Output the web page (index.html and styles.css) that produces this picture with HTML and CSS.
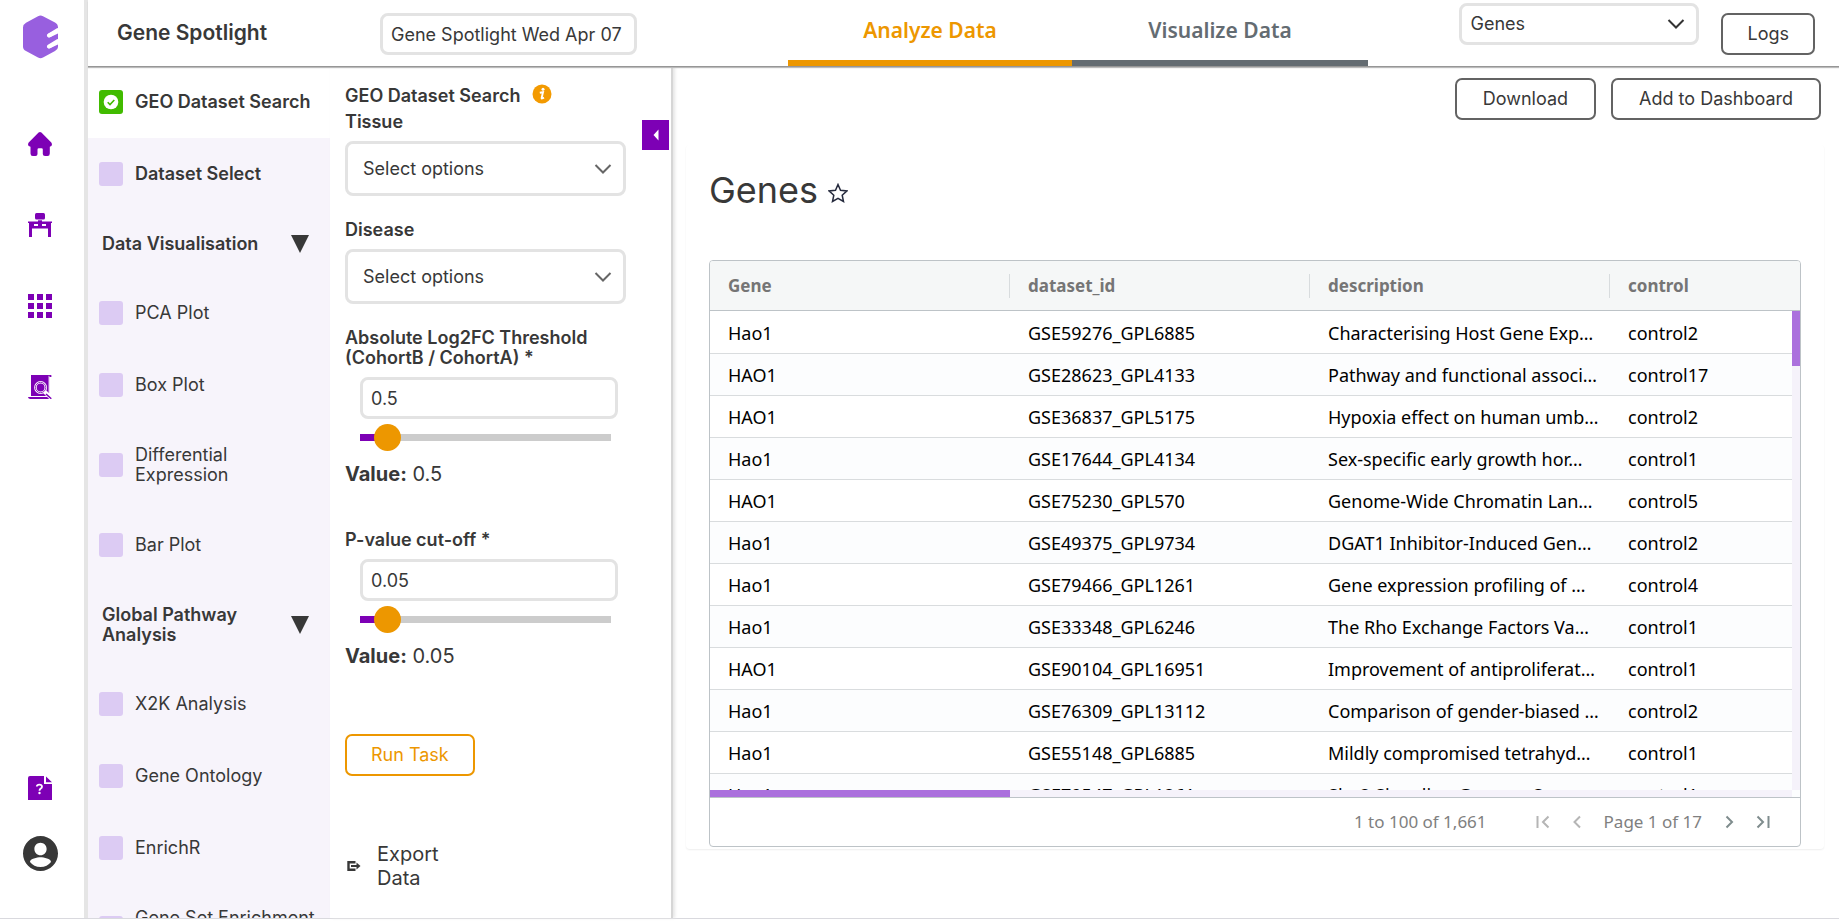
FILE: index.html
```html
<!DOCTYPE html>
<html lang="en">
<head>
<meta charset="utf-8">
<title>Gene Spotlight</title>
<link rel="stylesheet" href="styles.css">
</head>
<body>
<div class="app">
  <nav class="rail" aria-label="Main">
    <a class="rail-logo" href="#" aria-label="Start"><svg width="36" height="44" viewBox="0 0 36 44"><path fill="#985fdf" d="M15 1.2Q17.500 0 20 1.200L32 7.600Q35 9.300 35 12.500V14L25.500 18.500Q23.500 20 24.700 21.700Q25.700 22.700 27.500 22L35 18.500V28L25.500 30.500Q23.500 32 24.700 33Q25.700 33.700 27.500 33L35 29.500V32Q35 34.500 32 36L20 42.600Q17.500 43.800 15 42.600L3 36Q0 34.500 0 31.500V12.500Q0 9.500 3 7.800Z"/><path d="M26 20.500L35 15M26 31.500L35 26" stroke="#fff" stroke-width="4" stroke-linecap="round"/></svg></a>
    <a class="rail-link" href="#" aria-label="Home"><svg width="24" height="24" viewBox="0 0 24 24"><path fill="#7d00b5" d="M10.600.6Q12-.6 13.400.6L23.300 10.500Q24.600 12.500 23.300 14L21.800 14.700V21.500Q21.800 24 19.500 24H17Q14.800 24 14.800 22V17.500Q14.800 16.300 13.500 16.300H10.800Q9.500 16.300 9.500 17.500V22Q9.500 24 7.500 24H4.800Q2.500 24 2.500 21.500V14.700L.7 14Q-.6 12.500.7 10.500Z"/></svg></a>
    <a class="rail-link" href="#" aria-label="Workspace"><svg width="24" height="24" viewBox="0 0 24 24" fill="#7d00b5"><rect x="7" y="0" width="10" height="6.500" rx="1.500"/><rect x="10" y="7.300" width="4" height="2"/><path fill-rule="evenodd" d="M0 8.500H24V10H23V24H20V15.500H4V24H1V10H0ZM6 11V13H10V11ZM14 11V13H18V11Z"/></svg></a>
    <a class="rail-link" href="#" aria-label="Apps"><svg width="24" height="24" viewBox="0 0 24 24"><path fill="#7d00b5" d="M0 0h6v6H0zM9 0h6v6H9zM18 0h6v6h-6zM0 9h6v6H0zM9 9h6v6H9zM18 9h6v6h-6zM0 18h6v6H0zM9 18h6v6H9zM18 18h6v6h-6z"/></svg></a>
    <a class="rail-link" href="#" aria-label="Reports"><svg width="24" height="24" viewBox="0 0 24 24"><path fill="#7d00b5" d="M3 0H23Q24 .6 23.300 2H21.200V18L17.800 21H3ZM0 22H22V24H2Q0 23.500 0 22Z"/><path d="M21 .8V18" stroke="#fff" stroke-width=".8"/><path d="M16.500 16.500L23.300 23.300" stroke="#fff" stroke-width="4"/><circle cx="12.600" cy="12.500" r="5.200" fill="none" stroke="#fff" stroke-width="2.600"/><circle cx="12.600" cy="12.500" r="5.200" fill="none" stroke="#7d00b5" stroke-width=".8"/><path d="M18 19L23.300 23.700" stroke="#7d00b5" stroke-width="1.500"/></svg></a>
    <a class="rail-link rail-help" href="#" aria-label="Help"><svg width="24" height="24" viewBox="0 0 24 24"><path fill="#7d00b5" d="M2 0H16V8H24V24H0V2Q0 0 2 0ZM18 .5L24 6.300H18Z"/><path d="M8.800 10.500Q9 8.600 11.300 8.600Q14 8.600 14 10.700Q14 11.800 12.700 12.600Q11.500 13.300 11.500 14.700" fill="none" stroke="#fff" stroke-width="1.800"/><circle cx="11.500" cy="17" r="1.200" fill="#fff"/></svg></a>
    <a class="rail-user" href="#" aria-label="Account"><svg width="35" height="35" viewBox="2 2 20 20"><path fill="#383838" d="M12 2C6.480 2 2 6.480 2 12s4.480 10 10 10 10-4.480 10-10S17.520 2 12 2zm0 3.800c2 0 3.500 1.600 3.500 3.600s-1.500 3.600-3.500 3.600-3.500-1.600-3.500-3.600 1.500-3.600 3.500-3.600zm0 13.900c-2.500 0-4.700-1.100-6-2.900.03-1.700 4-2.600 6-2.600s5.970.9 6 2.600c-1.300 1.800-3.500 2.900-6 2.900z"/></svg></a>
  </nav>

  <div class="workspace">
    <header class="topbar">
      <h1 class="app-title">Gene Spotlight</h1>
      <input class="box session-name" type="text" aria-label="Session name" value="Gene Spotlight Wed Apr 07 2021">
      <div class="tabs" role="tablist">
        <button class="tab tab-active" role="tab" aria-selected="true">Analyze Data</button>
        <button class="tab" role="tab" aria-selected="false">Visualize Data</button>
      </div>
      <div class="select-wrap view-select">
        <select class="box" aria-label="View"><option>Genes</option></select>
        <svg class="chevron chevron-dark" width="18" height="10" viewBox="0 0 18 10"><path d="M1.500 1L9 8.500L16.500 1"/></svg>
      </div>
      <button class="btn btn-logs">Logs</button>
    </header>

    <div class="body">
      <aside class="steps">
        <label class="step step-active"><input class="step-check" type="checkbox" checked><svg class="tick" width="24" height="24" viewBox="0 0 24 24"><circle cx="12" cy="12" r="7.300" fill="#fff"/><path d="M8.700 12.200L11 14.500L15.300 10" fill="none" stroke="#41bb00" stroke-width="1.600"/></svg><span>GEO Dataset Search</span></label>
        <label class="step step-strong"><input class="step-check" type="checkbox"><span>Dataset Select</span></label>
        <button class="group"><span>Data Visualisation</span><span class="caret"></span></button>
        <label class="step"><input class="step-check" type="checkbox"><span>PCA Plot</span></label>
        <label class="step"><input class="step-check" type="checkbox"><span>Box Plot</span></label>
        <label class="step"><input class="step-check" type="checkbox"><span>Differential<br>Expression</span></label>
        <label class="step"><input class="step-check" type="checkbox"><span>Bar Plot</span></label>
        <button class="group"><span>Global Pathway<br>Analysis</span><span class="caret"></span></button>
        <label class="step"><input class="step-check" type="checkbox"><span>X2K Analysis</span></label>
        <label class="step"><input class="step-check" type="checkbox"><span>Gene Ontology</span></label>
        <label class="step"><input class="step-check" type="checkbox"><span>EnrichR</span></label>
        <label class="step"><input class="step-check" type="checkbox"><span>Gene Set Enrichment<br>Analysis</span></label>
      </aside>

      <form class="params">
        <button class="collapse" type="button" aria-label="Collapse panel"><svg width="6" height="12" viewBox="0 0 6 12"><path fill="#fff" d="M5.500.5V11.500L.5 6Z"/></svg></button>
        <h2 class="label params-title">GEO Dataset Search <svg width="20" height="20" viewBox="0 0 20 20"><circle cx="10" cy="10" r="9.500" fill="#f39a00"/><circle cx="11" cy="5.300" r="1.500" fill="#fff"/><path d="M7.800 8.800L11 8.200L9.600 14Q9.600 15 12 13.700" fill="none" stroke="#fff" stroke-width="1.900"/></svg></h2>
        <div class="field">
          <label class="label" for="tissue">Tissue</label>
          <div class="select-wrap"><select class="box box-tall" id="tissue"><option>Select options</option></select><svg class="chevron" width="18" height="10" viewBox="0 0 18 10"><path d="M1.500 1L9 8.500L16.500 1"/></svg></div>
        </div>
        <div class="field">
          <label class="label" for="disease">Disease</label>
          <div class="select-wrap"><select class="box box-tall" id="disease"><option>Select options</option></select><svg class="chevron" width="18" height="10" viewBox="0 0 18 10"><path d="M1.500 1L9 8.500L16.500 1"/></svg></div>
        </div>
        <div class="metric">
          <label class="label" for="fc">Absolute Log2FC Threshold<br>(CohortB / CohortA) *</label>
          <div class="metric-controls">
            <input class="box" id="fc" type="text" value="0.5">
            <input class="slider" type="range" aria-label="Log2FC threshold" min="0" max="8" step="0.1" value="0.5">
          </div>
          <p class="value"><strong>Value:</strong> 0.5</p>
        </div>
        <div class="metric">
          <label class="label" for="pv">P-value cut-off *</label>
          <div class="metric-controls">
            <input class="box" id="pv" type="text" value="0.05">
            <input class="slider" type="range" aria-label="P-value cut-off" min="0" max="0.8" step="0.01" value="0.05">
          </div>
          <p class="value"><strong>Value:</strong> 0.05</p>
        </div>
        <button class="btn btn-run" type="button">Run Task</button>
        <a class="export" href="#"><svg width="14" height="10" viewBox="0 0 14 10"><path d="M8.500 1.200H1.500V8.800H8.500" fill="none" stroke="#383838" stroke-width="2.400"/><path d="M4 5H11" stroke="#383838" stroke-width="2"/><path fill="#383838" d="M9.500 1.500L13.500 5L9.500 8.500Z"/></svg><span>Export<br>Data</span></a>
      </form>

      <main class="results">
        <div class="actions">
          <button class="btn btn-wide">Download</button>
          <button class="btn btn-wide">Add to Dashboard</button>
        </div>
        <section class="card">
          <h2 class="card-title">Genes <svg width="20" height="20" viewBox="0 0 20 20"><path fill="none" stroke="#252a3d" stroke-width="1.500" d="M10 1.500L12.500 7.200L19 7.900L14.200 12.200L15.500 18.500L10 15.300L4.500 18.500L5.800 12.200L1 7.900L7.500 7.200Z"/></svg></h2>
          <div class="grid">
            <div class="grid-view">
              <table class="table">
                <colgroup><col class="col"><col class="col"><col class="col"><col></colgroup>
                <thead><tr><th><div>Gene</div></th><th><div>dataset_id</div></th><th><div>description</div></th><th><div>control</div></th></tr></thead>
                <tbody>
                  <tr><td>Hao1</td><td>GSE59276_GPL6885</td><td>Characterising Host Gene Exp…</td><td>control2</td></tr>
                  <tr><td>HAO1</td><td>GSE28623_GPL4133</td><td>Pathway and functional associ…</td><td>control17</td></tr>
                  <tr><td>HAO1</td><td>GSE36837_GPL5175</td><td>Hypoxia effect on human umb…</td><td>control2</td></tr>
                  <tr><td>Hao1</td><td>GSE17644_GPL4134</td><td>Sex-specific early growth hor…</td><td>control1</td></tr>
                  <tr><td>HAO1</td><td>GSE75230_GPL570</td><td>Genome-Wide Chromatin Lan…</td><td>control5</td></tr>
                  <tr><td>Hao1</td><td>GSE49375_GPL9734</td><td>DGAT1 Inhibitor-Induced Gen…</td><td>control2</td></tr>
                  <tr><td>Hao1</td><td>GSE79466_GPL1261</td><td>Gene expression profiling of …</td><td>control4</td></tr>
                  <tr><td>Hao1</td><td>GSE33348_GPL6246</td><td>The Rho Exchange Factors Va…</td><td>control1</td></tr>
                  <tr><td>HAO1</td><td>GSE90104_GPL16951</td><td>Improvement of antiproliferat…</td><td>control1</td></tr>
                  <tr><td>Hao1</td><td>GSE76309_GPL13112</td><td>Comparison of gender-biased …</td><td>control2</td></tr>
                  <tr><td>Hao1</td><td>GSE55148_GPL6885</td><td>Mildly compromised tetrahyd…</td><td>control1</td></tr>
                  <tr><td>Hao1</td><td>GSE79547_GPL1261</td><td>Shp2 Signaling Governs S…</td><td>control1</td></tr>
                </tbody>
              </table>
              <div class="vscroll"><div class="vthumb"></div></div>
              <div class="hscroll"><div class="hthumb"></div></div>
            </div>
            <div class="pager">
              <span class="pager-count">1 to 100 of 1,661</span>
              <button class="pager-btn" disabled aria-label="First page"><svg width="14" height="14" viewBox="0 0 14 14"><path d="M1.500 1V13M12.500 1.500L7 7L12.500 12.500"/></svg></button>
              <button class="pager-btn" disabled aria-label="Previous page"><svg width="14" height="14" viewBox="0 0 14 14"><path d="M10 1.500L4.500 7L10 12.500"/></svg></button>
              <span>Page 1 of 17</span>
              <button class="pager-btn" aria-label="Next page"><svg width="14" height="14" viewBox="0 0 14 14"><path d="M4.500 1.500L10 7L4.500 12.500"/></svg></button>
              <button class="pager-btn" aria-label="Last page"><svg width="14" height="14" viewBox="0 0 14 14"><path d="M1.500 1.500L7 7L1.500 12.500M12.500 1V13"/></svg></button>
            </div>
          </div>
        </section>
      </main>
    </div>
  </div>
</div>
</body>
</html>
```
FILE: styles.css
```css
*, *::before, *::after { box-sizing: border-box; }

body {
  margin: 0;
  height: 100vh;
  padding-bottom: 2px;
  overflow: hidden;
  background: #fff;
  color: #383838;
  font: 18px/20px Inter, "Open Sans", sans-serif;
}

h1, h2, p { margin: 0; font-weight: inherit; }
a { color: inherit; text-decoration: none; }
svg { display: block; flex: none; }
button, input, select { font: inherit; color: inherit; margin: 0; }
button { background: none; border: 0; padding: 0; cursor: pointer; }

.app { display: flex; height: 100%; border-bottom: 1px solid #d9d9de; }

/* Icon rail */
.rail {
  flex: none;
  width: 88px;
  padding: 15px 0 47px 23px;
  border-right: 4px solid #e5e5e5;
  display: flex;
  flex-direction: column;
}
.rail-logo { margin-bottom: 73px; }
.rail-link { padding-left: 5px; margin-bottom: 57px; }
.rail-help { margin-top: auto; margin-bottom: 36px; }

.workspace { flex: 1; min-width: 0; display: flex; flex-direction: column; }

/* Top bar */
.topbar {
  position: relative;
  z-index: 1;
  flex: none;
  height: 66px;
  display: flex;
  align-items: flex-start;
  padding-right: 24px;
  background: #fff;
  box-shadow: 0 1px 0 #969696, 0 2px 1px #bbb;
}
.app-title { width: 292px; padding: 20px 0 0 29px; font-size: 21px; line-height: 26px; font-weight: 600; white-space: nowrap; }
.box {
  display: block;
  width: 100%;
  height: 42px;
  padding: 0 8px;
  border: 3px solid #e3e3e3;
  border-radius: 8px;
  background: #fff;
  appearance: none;
  outline: 0;
}
.box-tall { height: 55px; padding: 0 15px; }
.session-name { width: 257px; margin-top: 13px; }
.tabs { display: flex; margin-left: 151px; }
.tab {
  width: 296px;
  height: 66px;
  border-bottom: 6px solid #646c72;
  color: #646c72;
  font: 600 21px/24px "Noto Sans", sans-serif;
  white-space: nowrap;
}
.tab-active { width: 284px; color: #ed9700; border-color: #ed9700; }
.select-wrap { position: relative; }
.chevron { position: absolute; right: 14px; top: 50%; margin-top: -5px; pointer-events: none; fill: none; stroke: #666; stroke-width: 2; }
.chevron-dark { stroke: #333; }
.view-select { width: 240px; margin: 3px 22px 0 auto; }

.btn {
  height: 42px;
  padding: 0 24px;
  border: 2px solid #636363;
  border-radius: 7px;
  white-space: nowrap;
}
.btn-wide { padding: 0 26px; }
.btn-logs { margin-top: 13px; }

.body { flex: 1; min-height: 0; display: flex; }

/* Steps */
.steps { flex: none; width: 242px; overflow: hidden; background: #f7f4fb; }
.step {
  position: relative;
  display: flex;
  align-items: center;
  gap: 12px;
  padding: 24px 0 24px 11px;
  white-space: nowrap;
}
.step-check { flex: none; width: 24px; height: 24px; border-radius: 3px; background: #dccbf3; appearance: none; }
.step-check:checked { background: #41bb00; }
.tick { position: absolute; left: 11px; }
.step-active { background: #fff; font-weight: 600; }
.step-strong { font-weight: 600; }
.group {
  display: flex;
  align-items: center;
  justify-content: space-between;
  width: 100%;
  padding: 24px 21px 23px 14px;
  text-align: left;
  font-weight: 600;
}
.caret { border: 9px solid transparent; border-top: 18px solid #383838; border-bottom: 0; }

/* Parameters */
.params {
  position: relative;
  flex: none;
  width: 343px;
  padding: 20px 15px 0;
  border-right: 2px solid #d6d6d6;
  box-shadow: 2px 0 3px #e6e6e6;
}
.label { display: block; font-size: 18px; font-weight: 600; }
.params-title { display: flex; gap: 12px; margin-bottom: 6px; }
.params-title svg { margin-top: -2px; }
.field { width: 281px; margin-bottom: 24px; }
.field .label { margin-bottom: 9px; }
.metric { width: 281px; margin-bottom: 44px; }
.metric-controls { padding: 9px 8px 0 15px; }
.slider {
  display: block;
  width: 251px;
  height: 27px;
  margin: 5px 0 11px;
  appearance: none;
  background: linear-gradient(to right, #7d00b5 10%, #ccc 10%) center / 100% 7px no-repeat;
}
.slider::-webkit-slider-thumb { appearance: none; width: 27px; height: 27px; border-radius: 50%; background: #ed9700; }
.value { font-size: 20px; line-height: 24px; }
.btn-run { display: block; margin-top: 66px; border-color: #ed9700; color: #ed9700; }
.export { display: flex; align-items: center; gap: 16px; margin-top: 66px; padding-left: 2px; font-size: 20px; line-height: 24px; }
.collapse {
  position: absolute;
  top: 54px;
  right: 2px;
  width: 27px;
  height: 30px;
  display: grid;
  place-items: center;
  background: #7d00b5;
}

/* Results */
.results { flex: 1; min-width: 0; padding: 12px 15px 0 13px; }
.actions { display: flex; justify-content: flex-end; gap: 15px; padding-right: 3px; }
.card { margin-top: 25px; padding: 25px 23px 2px; border-radius: 4px; box-shadow: 0 1px 2px #eee; }
.card-title { display: flex; align-items: center; gap: 10px; margin-bottom: 50px; font-size: 36px; line-height: 40px; }
.card-title svg { margin-top: 5px; }
.grid {
  overflow: hidden;
  border: 1px solid #bdc3c7;
  border-radius: 4px;
  color: #000;
  font: 18px/24px "Noto Sans", sans-serif;
}
.grid-view { position: relative; height: 537px; overflow: hidden; border-bottom: 1px solid #bdc3c7; }
.table { width: 100%; table-layout: fixed; border-collapse: separate; border-spacing: 0; }
.col { width: 300px; }
.table th { height: 50px; padding: 0; border-bottom: 1px solid #bdc3c7; background: #f5f7f7; color: #757575; text-align: left; font-size: 17px; font-weight: 700; }
.table th div { padding-left: 18px; border-right: 1px solid #d8dcde; }
.table th:last-child div { border: 0; }
.table td { height: 42px; padding: 1px 0 0 18px; border-bottom: 1px solid #d9dcde; white-space: nowrap; }
.table tr:nth-child(even) td { background: #fcfdfe; }
.table tbody tr:first-child td { height: 43px; }
.vscroll { position: absolute; top: 50px; right: 0; bottom: 7px; width: 8px; background: #f5f2fa; }
.vthumb { height: 55px; background: #ab70dd; }
.hscroll { position: absolute; left: 0; right: 8px; bottom: 0; height: 7px; background: #f5f2fa; }
.hthumb { width: 300px; height: 7px; background: #ab70dd; }
.pager { display: flex; align-items: center; justify-content: flex-end; gap: 20px; height: 48px; padding-right: 30px; color: #808080; font-size: 17px; }
.pager-count { margin-right: 29px; }
.pager-btn svg { fill: none; stroke: #7f8c8d; stroke-width: 2; }
.pager-btn:disabled svg { stroke: #b5b5b5; }
```
